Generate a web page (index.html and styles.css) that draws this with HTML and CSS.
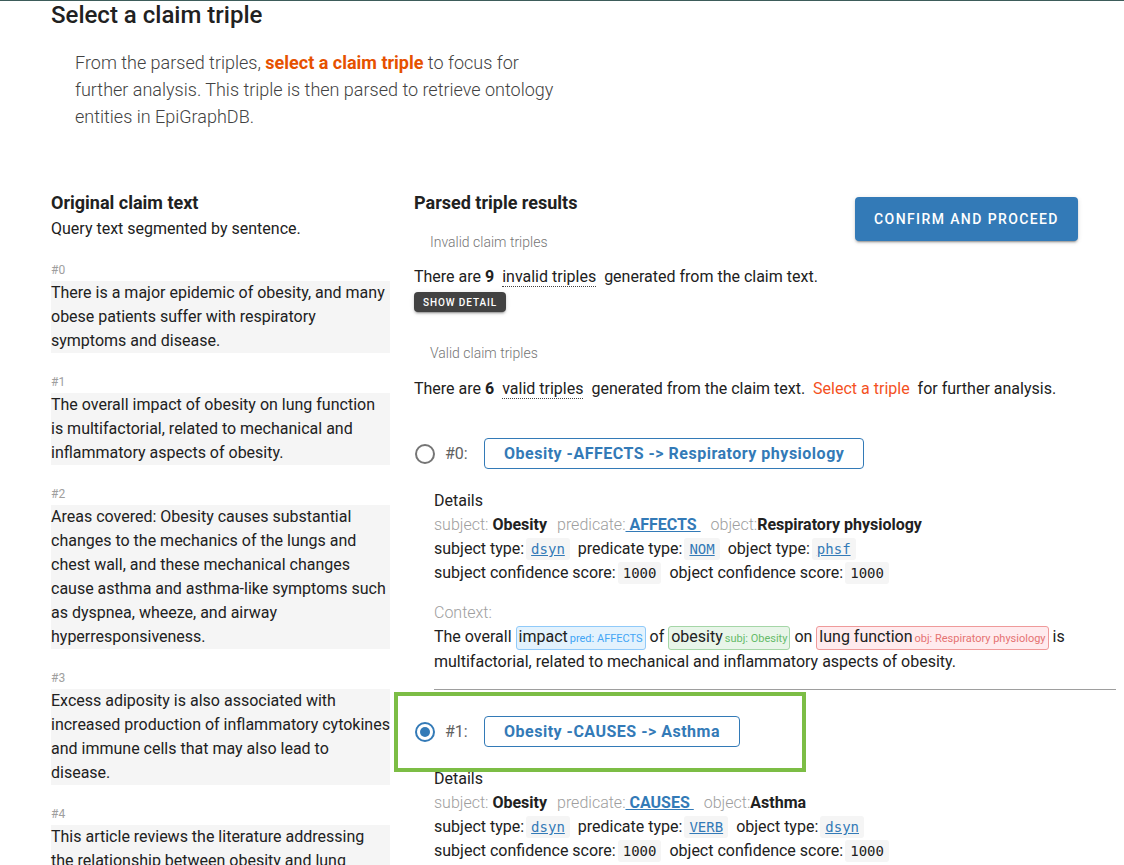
FILE: index.html
```html
<!DOCTYPE html>
<html>
<head>
<meta charset="utf-8">
<link rel="stylesheet" href="styles.css">
</head>
<body>
<div class="topline"></div>
<main class="page">
  <h2 class="title">Select a claim triple</h2>
  <p class="intro">From the parsed triples, <strong class="accent">select a claim triple</strong> to focus for further analysis. This triple is then parsed to retrieve ontology entities in EpiGraphDB.</p>

  <div class="columns">
    <section class="left">
      <h3 class="col-title">Original claim text</h3>
      <p class="col-sub">Query text segmented by sentence.</p>
      <div class="sent">
        <div class="sent-label">#0</div>
        <div class="sent-text">There is a major epidemic of obesity, and many obese patients suffer with respiratory symptoms and disease.</div>
      </div>
      <div class="sent">
        <div class="sent-label">#1</div>
        <div class="sent-text">The overall impact of obesity on lung function is multifactorial, related to mechanical and inflammatory aspects of obesity.</div>
      </div>
      <div class="sent">
        <div class="sent-label">#2</div>
        <div class="sent-text">Areas covered: Obesity causes substantial changes to the mechanics of the lungs and chest wall, and these mechanical changes cause asthma and asthma-like symptoms such as dyspnea, wheeze, and airway hyperresponsiveness.</div>
      </div>
      <div class="sent">
        <div class="sent-label">#3</div>
        <div class="sent-text">Excess adiposity is also associated with increased production of inflammatory cytokines and immune cells that may also lead to disease.</div>
      </div>
      <div class="sent">
        <div class="sent-label">#4</div>
        <div class="sent-text">This article reviews the literature addressing the relationship between obesity and lung function and disease.</div>
      </div>
    </section>

    <section class="right">
      <button class="btn-primary">CONFIRM AND PROCEED</button>
      <h3 class="col-title">Parsed triple results</h3>
      <div class="subhead">Invalid claim triples</div>
      <p class="summary">There are <b>9</b> <span class="dotted">invalid triples</span> generated from the claim text.</p>
      <button class="btn-small">SHOW DETAIL</button>

      <div class="subhead subhead-2">Valid claim triples</div>
      <p class="summary summary-2">There are <b>6</b> <span class="dotted">valid triples</span> generated from the claim text. <span class="select">Select a triple</span> for further analysis.</p>

      <div class="triple first">
        <div class="option">
          <span class="radio"></span>
          <span class="num">#0:</span>
          <span class="triple-btn">Obesity -AFFECTS -&gt; Respiratory physiology</span>
        </div>
        <div class="details">
          <div class="line">Details</div>
          <div class="line"><span class="lbl">subject:</span> <b>Obesity</b> <span class="lbl sp">predicate:</span><a class="pred">&nbsp;AFFECTS&nbsp;</a> <span class="lbl sp">object:</span><b>Respiratory physiology</b></div>
          <div class="line">subject type:<code class="chip"><a>dsyn</a></code><span class="sp">predicate type:</span><code class="chip"><a>NOM</a></code><span class="sp">object type:</span><code class="chip"><a>phsf</a></code></div>
          <div class="line">subject confidence score:<code class="chip">1000</code><span class="sp">object confidence score:</span><code class="chip">1000</code></div>
          <div class="line ctx-label">Context:</div>
          <div class="line">The overall <span class="mark m-pred">impact<small>pred: AFFECTS</small></span> of <span class="mark m-subj">obesity<small>subj: Obesity</small></span> on <span class="mark m-obj">lung function<small>obj: Respiratory physiology</small></span> is multifactorial, related to mechanical and inflammatory aspects of obesity.</div>
        </div>
        <hr class="sep">
      </div>

      <div class="triple">
        <div class="option">
          <span class="highlight"></span>
          <span class="radio checked"></span>
          <span class="num">#1:</span>
          <span class="triple-btn">Obesity -CAUSES -&gt; Asthma</span>
        </div>
        <div class="details">
          <div class="line">Details</div>
          <div class="line"><span class="lbl">subject:</span> <b>Obesity</b> <span class="lbl sp">predicate:</span><a class="pred">&nbsp;CAUSES&nbsp;</a> <span class="lbl sp">object:</span><b>Asthma</b></div>
          <div class="line">subject type:<code class="chip"><a>dsyn</a></code><span class="sp">predicate type:</span><code class="chip"><a>VERB</a></code><span class="sp">object type:</span><code class="chip"><a>dsyn</a></code></div>
          <div class="line">subject confidence score:<code class="chip">1000</code><span class="sp">object confidence score:</span><code class="chip">1000</code></div>
        </div>
      </div>
    </section>
  </div>
</main>
</body>
</html>
```

FILE: styles.css
```css
html, body {
  margin: 0;
  padding: 0;
  background: #fff;
}
body {
  font-family: Roboto, "Liberation Sans", sans-serif;
  color: rgba(0, 0, 0, 0.87);
  font-size: 16px;
  overflow: hidden;
  height: 865px;
}
.topline {
  height: 1px;
  background: #3d5c5a;
}
.page {
  padding: 0 8px 0 51px;
}
.title {
  margin: 0;
  font-size: 24px;
  line-height: 28px;
  font-weight: 500;
  color: #212121;
}
.intro {
  margin: 20px 0 0 24px;
  width: 490px;
  font-size: 18px;
  line-height: 27px;
  font-weight: 300;
  color: #424242;
}
.accent {
  color: #e65100;
  font-weight: 700;
}
.columns {
  display: flex;
  gap: 24px;
  margin-top: 61px;
}
.left {
  width: 339px;
  flex: none;
}
.right {
  flex: 1;
  min-width: 0;
}
.col-title {
  margin: 0;
  font-size: 18px;
  line-height: 24px;
  font-weight: 700;
  color: #212121;
}
.col-sub {
  margin: 2px 0 0;
  line-height: 24px;
  color: #212121;
}
.sent {
  margin-top: 18px;
}
.sent-label {
  font-size: 12px;
  line-height: 22px;
  color: #9e9e9e;
}
.sent-text {
  background: #f5f5f5;
  line-height: 24px;
  color: #212121;
}

/* right column */
.btn-primary {
  float: right;
  margin: 6px 38px 0 0;
  height: 44px;
  width: 223px;
  border: none;
  border-radius: 4px;
  background: #337ab7;
  color: #fff;
  font-family: Roboto, "Liberation Sans", sans-serif;
  font-size: 14px;
  font-weight: 500;
  letter-spacing: 1.4px;
  box-shadow: 0 3px 1px -2px rgba(0,0,0,.2), 0 2px 2px 0 rgba(0,0,0,.14), 0 1px 5px 0 rgba(0,0,0,.12);
}
.subhead {
  margin: 17px 0 0 16px;
  font-size: 14px;
  line-height: 20px;
  color: #757575;
  font-weight: 300;
}
.subhead-2 {
  margin-top: 31px;
}
.summary {
  margin: 13px 0 0;
  line-height: 24px;
  color: #212121;
}
.summary-2 {
  margin-top: 14px;
}
.summary b {
  font-weight: 700;
  margin-right: 4px;
}
.dotted {
  border-bottom: 1px dotted #424242;
  margin-right: 4px;
}
.select {
  color: #f4511e;
  margin: 0 4px 0 4px;
}
.btn-small {
  display: block;
  margin-top: 3px;
  height: 20px;
  width: 92px;
  padding: 0;
  border: none;
  border-radius: 4px;
  background: #424242;
  color: #fff;
  font-family: Roboto, "Liberation Sans", sans-serif;
  font-size: 10px;
  font-weight: 500;
  letter-spacing: 0.9px;
  box-shadow: 0 3px 1px -2px rgba(0,0,0,.2), 0 2px 2px 0 rgba(0,0,0,.14), 0 1px 5px 0 rgba(0,0,0,.12);
}
.triple.first {
  margin-top: 37px;
}
.triple {
  margin-top: 26px;
}
.option {
  position: relative;
  display: flex;
  align-items: center;
  height: 31px;
  padding-left: 1px;
}
.radio {
  width: 20px;
  height: 20px;
  box-sizing: border-box;
  border: 2px solid #757575;
  border-radius: 50%;
  flex: none;
  position: relative;
}
.radio.checked {
  border-color: #337ab7;
}
.radio.checked::after {
  content: "";
  position: absolute;
  left: 3px;
  top: 3px;
  width: 10px;
  height: 10px;
  border-radius: 50%;
  background: #337ab7;
}
.num {
  margin-left: 10px;
  width: 39px;
  color: #616161;
}
.triple-btn {
  box-sizing: border-box;
  height: 31px;
  line-height: 29px;
  padding: 0 19px;
  border: 1px solid #337ab7;
  border-radius: 4px;
  color: #337ab7;
  font-weight: 700;
  letter-spacing: 0.5px;
}
.highlight {
  position: absolute;
  left: -20px;
  top: -24px;
  width: 412px;
  height: 80px;
  box-sizing: border-box;
  border: 4px solid #7cbd45;
  pointer-events: none;
}
.details {
  margin: 20px 0 0 20px;
}
.line {
  line-height: 24px;
  color: #212121;
}
.lbl {
  color: #9e9e9e;
  font-weight: 300;
}
.sp {
  margin-left: 8px;
}
.line b {
  font-weight: 700;
}
.pred {
  color: #337ab7;
  font-weight: 700;
  text-decoration: underline;
}
.lbl.sp {
  margin-left: 6px;
}
.chip {
  display: inline-block;
  margin-left: 2px;
  background: #f5f5f5;
  border-radius: 3px;
  padding: 0 5px;
  line-height: 22px;
  font-family: "DejaVu Sans Mono", "Liberation Mono", monospace;
  font-size: 14px;
  color: #212121;
  vertical-align: baseline;
}
.chip a {
  color: #337ab7;
  text-decoration: underline;
}
.ctx-label {
  margin-top: 16px;
  color: #9e9e9e;
  font-weight: 300;
}
.mark {
  display: inline-block;
  border: 1px solid;
  border-radius: 3px;
  line-height: 20px;
  padding: 0 2px;
}
.mark small {
  font-size: 11px;
  margin-left: 2px;
}
.m-pred {
  background: #e3f2fd;
  border-color: #90caf9;
}
.m-pred small { color: #42a5f5; }
.m-subj {
  background: #e8f5e9;
  border-color: #a5d6a7;
}
.m-subj small { color: #66bb6a; }
.m-obj {
  background: #ffebee;
  border-color: #ef9a9a;
}
.m-obj small { color: #e57373; }
.sep {
  margin: 15px 0 0 20px;
  border: none;
  border-top: 1px solid #9e9e9e;
}
```
